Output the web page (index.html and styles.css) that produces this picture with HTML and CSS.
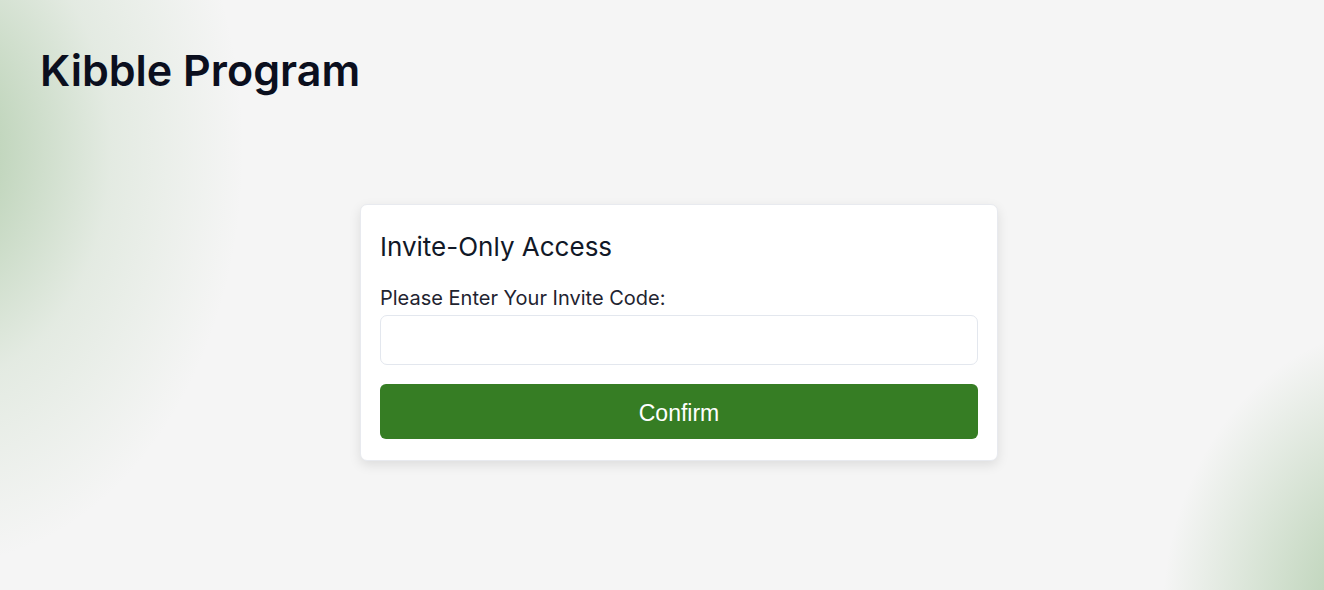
FILE: index.html
```html
<!DOCTYPE html>
<html lang="en">
<head>
<meta charset="utf-8">
<title>Kibble Program</title>
<link rel="stylesheet" href="styles.css">
</head>
<body>
<div class="page">
  <header class="header">
    <h1 class="brand">Kibble Program</h1>
  </header>
  <main class="main">
    <form class="card" onsubmit="return false">
      <h2 class="card-title">Invite-Only Access</h2>
      <label class="label" for="code">Please Enter Your Invite Code:</label>
      <input class="input" id="code" type="text">
      <button class="button" type="submit">Confirm</button>
    </form>
  </main>
</div>
</body>
</html>
```

FILE: styles.css
```css
* { box-sizing: border-box; }
html, body { margin: 0; height: 100%; }
body {
  font-family: "Inter", "Liberation Sans", sans-serif;
  color: #111827;
  background-color: #f5f5f5;
  background-image:
    radial-gradient(ellipse 380px 520px at -60px 150px, rgba(120, 170, 110, 0.55), rgba(120, 170, 110, 0.14) 45%, rgba(120, 170, 110, 0) 80%),
    radial-gradient(ellipse 340px 420px at 1400px 620px, rgba(120, 170, 110, 0.6), rgba(120, 170, 110, 0) 70%);
}
.page {
  height: 590px;
  display: flex;
  flex-direction: column;
}
.header {
  padding: 40px 40px 0;
}
.brand {
  margin: 0;
  font-family: "Inter", "Liberation Sans", sans-serif;
  font-weight: 600;
  font-size: 43px;
  line-height: 60px;
  letter-spacing: 0;
  color: #0b0f1e;
}
.main {
  display: flex;
  justify-content: center;
  padding: 104px 0 0 34px;
}
.card {
  width: 638px;
  background: #ffffff;
  border: 1px solid #e8eaef;
  border-radius: 7px;
  box-shadow: 0 4px 12px rgba(0, 0, 0, 0.1);
  padding: 24px 19px 21px 19px;
  display: flex;
  flex-direction: column;
}
.card-title {
  margin: 0 0 20px;
  font-weight: 400;
  font-size: 26px;
  line-height: 36px;
  letter-spacing: 0;
  color: #111827;
}
.label {
  font-size: 20px;
  line-height: 27px;
  color: #1f2430;
  margin-bottom: 3px;
}
.input {
  height: 50px;
  width: 100%;
  border: 1px solid #e3e7ee;
  border-radius: 7px;
  background: #fff;
  font-size: 18px;
  margin-bottom: 19px;
}
.button {
  height: 55px;
  width: 100%;
  border: none;
  border-radius: 6px;
  background: #367d24;
  color: #ffffff;
  font-family: "Liberation Sans", Arial, sans-serif;
  font-size: 23px;
  padding-top: 4px;
  cursor: pointer;
}
```
